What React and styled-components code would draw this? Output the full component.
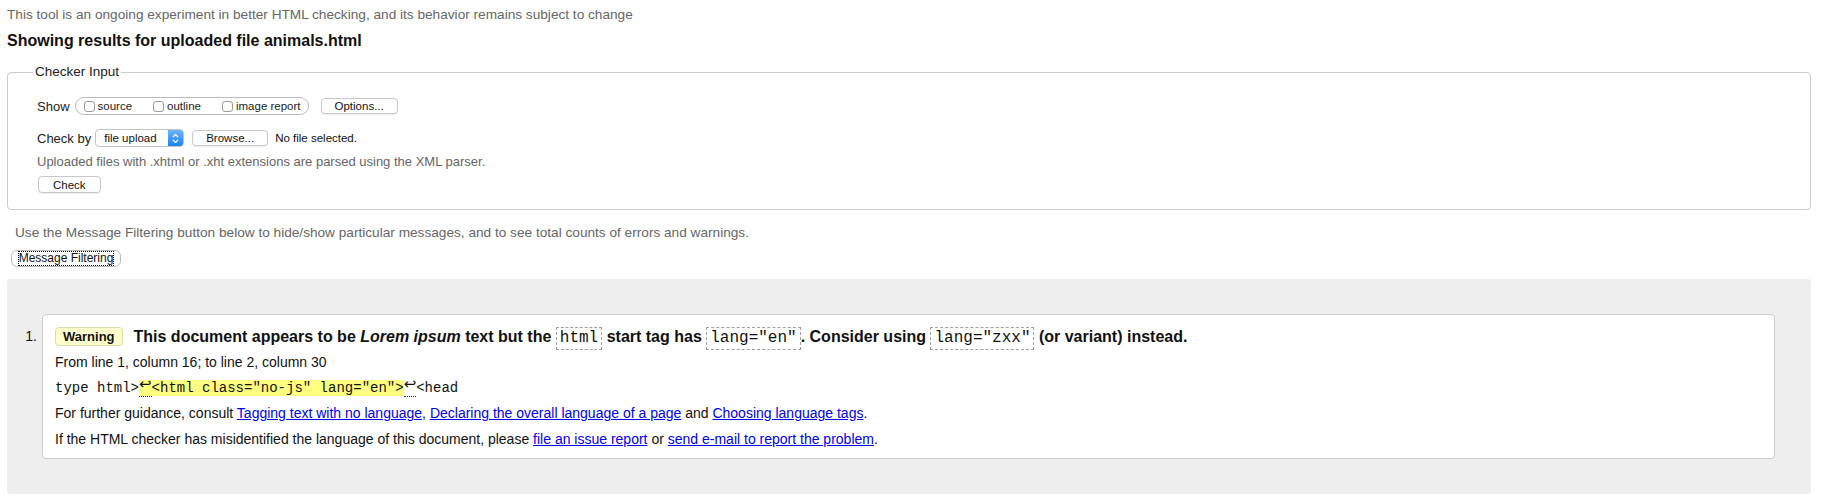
import React from 'react';
import styled, { createGlobalStyle } from 'styled-components';

const GlobalStyle = createGlobalStyle`
  html, body {
    margin: 0;
    padding: 0;
    background: #fff;
  }
  body {
    font-family: "Liberation Sans", Arial, Helvetica, sans-serif;
    color: #111;
  }
`;

const Page = styled.div`
  padding: 6px 17px 3px 7px;
`;

const Note = styled.p`
  margin: ${p => p.$mt || 0}px 0 0;
  padding-left: ${p => p.$indent || 0}px;
  font-size: 13.65px;
  line-height: 18px;
  color: #666;
`;

const Heading = styled.h2`
  margin: 7px 0 0;
  font-size: 16px;
  line-height: 20px;
  font-weight: bold;
  color: #111;
`;

const Fieldset = styled.fieldset`
  margin: 12px 0 0;
  padding: 16px 29px 16px 29px;
  border: 1px solid #ccc;
  border-radius: 4px;
  min-width: 0;
`;

const Legend = styled.legend`
  margin-left: -4px;
  padding: 0 2px;
  font-size: 13.5px;
  line-height: 18px;
  color: #222;
`;

const FormRow = styled.div`
  display: flex;
  align-items: center;
  height: 18px;
  margin-top: ${p => p.$mt || 0}px;
  font-size: 13px;
  color: #222;
`;

const FieldLabel = styled.span`
  margin-right: ${p => p.$gap}px;
`;

const OptionGroup = styled.div`
  display: flex;
  align-items: center;
  gap: 21px;
  height: 18px;
  box-sizing: border-box;
  padding: 0 7px 0 8px;
  border: 1px solid #bdbdbd;
  border-radius: 9px;
`;

const Option = styled.label`
  display: flex;
  align-items: center;
  gap: 3px;
  font-size: 11.5px;
  color: #222;
`;

const CheckBox = styled.span`
  width: 11px;
  height: 11px;
  box-sizing: border-box;
  border: 1px solid #9c9c9c;
  border-radius: 3px;
  background: #fff;
`;

const Button = styled.button`
  height: 16px;
  margin-left: ${p => p.$ml || 0}px;
  padding: 0 ${p => p.$px || 13}px;
  font-family: inherit;
  font-size: 11.5px;
  line-height: 14px;
  color: #111;
  background: #fff;
  border: 1px solid #c8c8c8;
  border-radius: 4px;
  box-shadow: 0 1px 1px rgba(0, 0, 0, 0.07);
`;

const Select = styled.div`
  display: flex;
  width: 89px;
  height: 18px;
  box-sizing: border-box;
  margin-left: 4px;
  border: 1px solid #c4c4c4;
  border-radius: 4px;
  background: #fff;
  overflow: hidden;
`;

const SelectText = styled.span`
  flex: 1;
  padding-left: 8px;
  font-size: 11.5px;
  line-height: 16px;
  color: #111;
`;

const SelectArrow = styled.span`
  width: 15px;
  display: flex;
  align-items: center;
  justify-content: center;
  background: linear-gradient(#6fb5fb, #1d80f5);
`;

const FileName = styled.span`
  margin-left: 7px;
  font-size: 11.5px;
  color: #111;
`;

const Hint = styled.p`
  margin: 6px 0 0;
  font-size: 13px;
  line-height: 18px;
  color: #666;
`;

const CheckButton = styled(Button)`
  display: block;
  height: 17px;
  margin: 5px 0 0 1px;
`;

const FilterButton = styled.button`
  display: flex;
  align-items: center;
  justify-content: center;
  width: 110px;
  height: 17px;
  margin: 8px 0 0 4px;
  padding: 0;
  font-family: inherit;
  font-size: 12px;
  color: #111;
  background: #fff;
  border: 1px solid #bbb;
  border-radius: 6px;
`;

const FocusText = styled.span`
  line-height: 13px;
  outline: 1px dotted #000;
`;

const Results = styled.div`
  margin-top: 12px;
  padding: 35px 36px 35px 15px;
  background: #eee;
  border-radius: 4px;
`;

const MessageList = styled.ol`
  margin: 0;
  padding: 0;
  list-style: none;
`;

const MessageItem = styled.li`
  display: flex;
  align-items: flex-start;
`;

const Num = styled.span`
  width: 20px;
  box-sizing: border-box;
  padding: 10px 5px 0 0;
  text-align: right;
  font-size: 14px;
  line-height: 25.5px;
  color: #111;
`;

const Card = styled.div`
  flex: 1;
  padding: 9px 12px 6px 12px;
  background: #fff;
  border: 1px solid #ccc;
  border-radius: 4px;
`;

const Message = styled.p`
  margin: 0;
  font-size: 16px;
  font-weight: bold;
  line-height: 25.5px;
  color: #111;
`;

const Badge = styled.span`
  display: inline-block;
  margin-right: 11px;
  padding: 0 7px;
  font-size: 13px;
  line-height: 17px;
  vertical-align: 1px;
  background: #ffffcc;
  border: 1px solid #dcdca6;
  border-radius: 4px;
`;

const Code = styled.code`
  display: inline-block;
  padding: 2px 3px;
  font-family: "Liberation Mono", "Courier New", monospace;
  font-weight: normal;
  line-height: 17px;
  border: 1px dashed #a0a0a0;
`;

const Line = styled.p`
  margin: 0;
  font-size: 14px;
  line-height: 25.5px;
  color: #111;
`;

const CodeLine = styled(Line)`
  font-family: "Liberation Mono", "Courier New", monospace;
`;

const Mark = styled.mark`
  background: #ffff80;
  color: inherit;
`;

const Eol = styled.span`
  border-bottom: 1px dotted #333;
`;

const EolGlyph = styled.span`
  font-family: "DejaVu Sans", sans-serif;
  font-size: 15px;
  line-height: 0;
  vertical-align: 3px;
`;

const Link = styled.a`
  color: #0000ee;
  text-decoration: underline;
`;

const Chevrons = () => (
  <svg width="7" height="11" viewBox="0 0 7 11">
    <path d="M1 4 L3.5 1.5 L6 4 M1 7 L3.5 9.5 L6 7" fill="none" stroke="#fff" strokeWidth="1.2" />
  </svg>
);

const Eoln = () => (
  <Eol>
    <EolGlyph>↩</EolGlyph>
  </Eol>
);

const App = () => {
  return (
    <Page>
      <GlobalStyle />
      <Note>
        This tool is an ongoing experiment in better HTML checking, and its behavior remains subject to change
      </Note>
      <Heading>Showing results for uploaded file animals.html</Heading>

      <Fieldset>
        <Legend>Checker Input</Legend>
        <FormRow>
          <FieldLabel $gap={5}>Show</FieldLabel>
          <OptionGroup>
            <Option>
              <CheckBox />
              source
            </Option>
            <Option>
              <CheckBox />
              outline
            </Option>
            <Option>
              <CheckBox />
              image report
            </Option>
          </OptionGroup>
          <Button $ml={12}>Options...</Button>
        </FormRow>
        <FormRow $mt={14}>
          <FieldLabel $gap={0}>Check by</FieldLabel>
          <Select>
            <SelectText>file upload</SelectText>
            <SelectArrow>
              <Chevrons />
            </SelectArrow>
          </Select>
          <Button $ml={8}>Browse...</Button>
          <FileName>No file selected.</FileName>
        </FormRow>
        <Hint>Uploaded files with .xhtml or .xht extensions are parsed using the XML parser.</Hint>
        <CheckButton $px={14}>Check</CheckButton>
      </Fieldset>

      <Note $mt={14} $indent={8}>
        Use the Message Filtering button below to hide/show particular messages, and to see total counts of errors and warnings.
      </Note>
      <FilterButton>
        <FocusText>Message Filtering</FocusText>
      </FilterButton>

      <Results>
        <MessageList>
          <MessageItem>
            <Num>1.</Num>
            <Card>
              <Message>
                <Badge>Warning</Badge>
                This document appears to be <em>Lorem ipsum</em> text but the <Code>html</Code> start tag has{' '}
                <Code>lang="en"</Code>. Consider using <Code>lang="zxx"</Code> (or variant) instead.
              </Message>
              <Line>From line 1, column 16; to line 2, column 30</Line>
              <CodeLine>
                type html&gt;
                <Mark>
                  <Eoln />
                  &lt;html class="no-js" lang="en"&gt;
                </Mark>
                <Eoln />
                &lt;head
              </CodeLine>
              <Line>
                For further guidance, consult <Link href="#">Tagging text with no language</Link>,{' '}
                <Link href="#">Declaring the overall language of a page</Link> and{' '}
                <Link href="#">Choosing language tags</Link>.
              </Line>
              <Line>
                If the HTML checker has misidentified the language of this document, please{' '}
                <Link href="#">file an issue report</Link> or <Link href="#">send e-mail to report the problem</Link>.
              </Line>
            </Card>
          </MessageItem>
        </MessageList>
      </Results>
    </Page>
  );
};

export default App;
